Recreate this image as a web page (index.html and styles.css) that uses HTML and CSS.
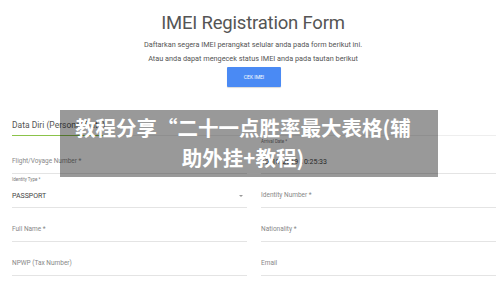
FILE: index.html
```html
<html>

<head>
	<title>IMEI Registration Form</title>
	<meta name="viewport" content="width=device-width, initial-scale=1.0">

	<link rel="stylesheet" href="styles.css">
</head>

<body>
	<div class="header">
		<h1>IMEI Registration Form</h1>
		<p>Daftarkan segera IMEI perangkat selular anda pada form berikut ini.</p>
		<p>Atau anda dapat mengecek status IMEI anda pada tautan berikut</p>
		<button class="cek-btn">CEK IMEI</button>
	</div>

	<div class="tabs">
		<div class="tab active">Data Diri (Personal Data)</div>
	</div>

	<div class="form">
		<div class="field">
			<span class="placeholder">Flight/Voyage Number *</span>
		</div>
		<div class="field">
			<span class="small-label">Arrival Date *</span>
			<span class="value">10/10/2019 10:25:33</span>
		</div>
		<div class="field select">
			<span class="small-label">Identity Type *</span>
			<span class="value">PASSPORT</span>
			<span class="arrow"></span>
		</div>
		<div class="field">
			<span class="placeholder">Identity Number *</span>
		</div>
		<div class="field">
			<span class="placeholder">Full Name *</span>
		</div>
		<div class="field">
			<span class="placeholder">Nationality *</span>
		</div>
		<div class="field">
			<span class="placeholder">NPWP (Tax Number)</span>
		</div>
		<div class="field">
			<span class="placeholder">Email</span>
		</div>
	</div>

	<div class="overlay">教程分享“二十一点胜率最大表格(辅<br>助外挂+教程)</div>
</body>

</html>
```

FILE: styles.css
```css
body {
	font-family: Roboto, 'Open Sans', sans-serif;
	background-color: #fff;
	color: #555;
	margin: 0;
	width: 500px;
	height: 288px;
	overflow: hidden;
	position: relative;
}

.header {
	text-align: center;
	padding-top: 10px;
	padding-left: 6px;
}

h1 {
	font-weight: 400;
	font-size: 18.5px;
	letter-spacing: -0.2px;
	color: #555;
	margin: 0 0 2px 0;
	line-height: 26px;
}

.header p {
	font-size: 7.3px;
	margin: 0;
	line-height: 14px;
	color: #555;
}

.cek-btn {
	display: block;
	background-color: #4a8af4;
	border: 0;
	border-radius: 1px;
	color: #fff;
	font-family: inherit;
	font-size: 5px;
	width: 54px;
	height: 20px;
	margin: 1px auto 0 221px;
	box-shadow: 0 1px 1px rgba(0, 0, 0, 0.15);
}

.tabs {
	margin: 33px 4px 0 12px;
	border-bottom: 1px solid #eee;
	display: flex;
}

.tab {
	font-size: 8.5px;
	color: #555;
	padding: 0 0 5px 0;
	width: 103px;
}

.tab.active {
	border-bottom: 1px solid #8bc34a;
	margin-bottom: -1px;
}

.form {
	display: grid;
	grid-template-columns: 1fr 1fr;
	column-gap: 14px;
	margin: 0 4px 0 12px;
}

.field {
	position: relative;
	height: 34px;
	border-bottom: 1px solid #e4e4e4;
	display: flex;
	flex-direction: column;
	justify-content: flex-end;
	padding-bottom: 7px;
	box-sizing: border-box;
}

.form .field:nth-child(-n+2) {
	height: 38px;
}

.placeholder {
	font-size: 6.5px;
	color: #888;
	padding-bottom: 1px;
}

.small-label {
	font-size: 4.5px;
	color: #777;
	position: absolute;
	top: 3px;
	left: 0;
}

.value {
	font-size: 7px;
	color: #444;
}

.arrow {
	position: absolute;
	right: 4px;
	bottom: 10px;
	border-left: 2px solid transparent;
	border-right: 2px solid transparent;
	border-top: 2px solid #999;
}

.overlay {
	position: absolute;
	left: 60px;
	top: 110px;
	width: 378px;
	height: 67px;
	background-color: rgba(0, 0, 0, 0.4);
	color: #fff;
	font-family: 'Noto Sans CJK SC', sans-serif;
	font-weight: 700;
	font-size: 20.5px;
	line-height: 30px;
	text-align: center;
	padding: 2px 12px 0 0;
	box-sizing: border-box;
}
```
